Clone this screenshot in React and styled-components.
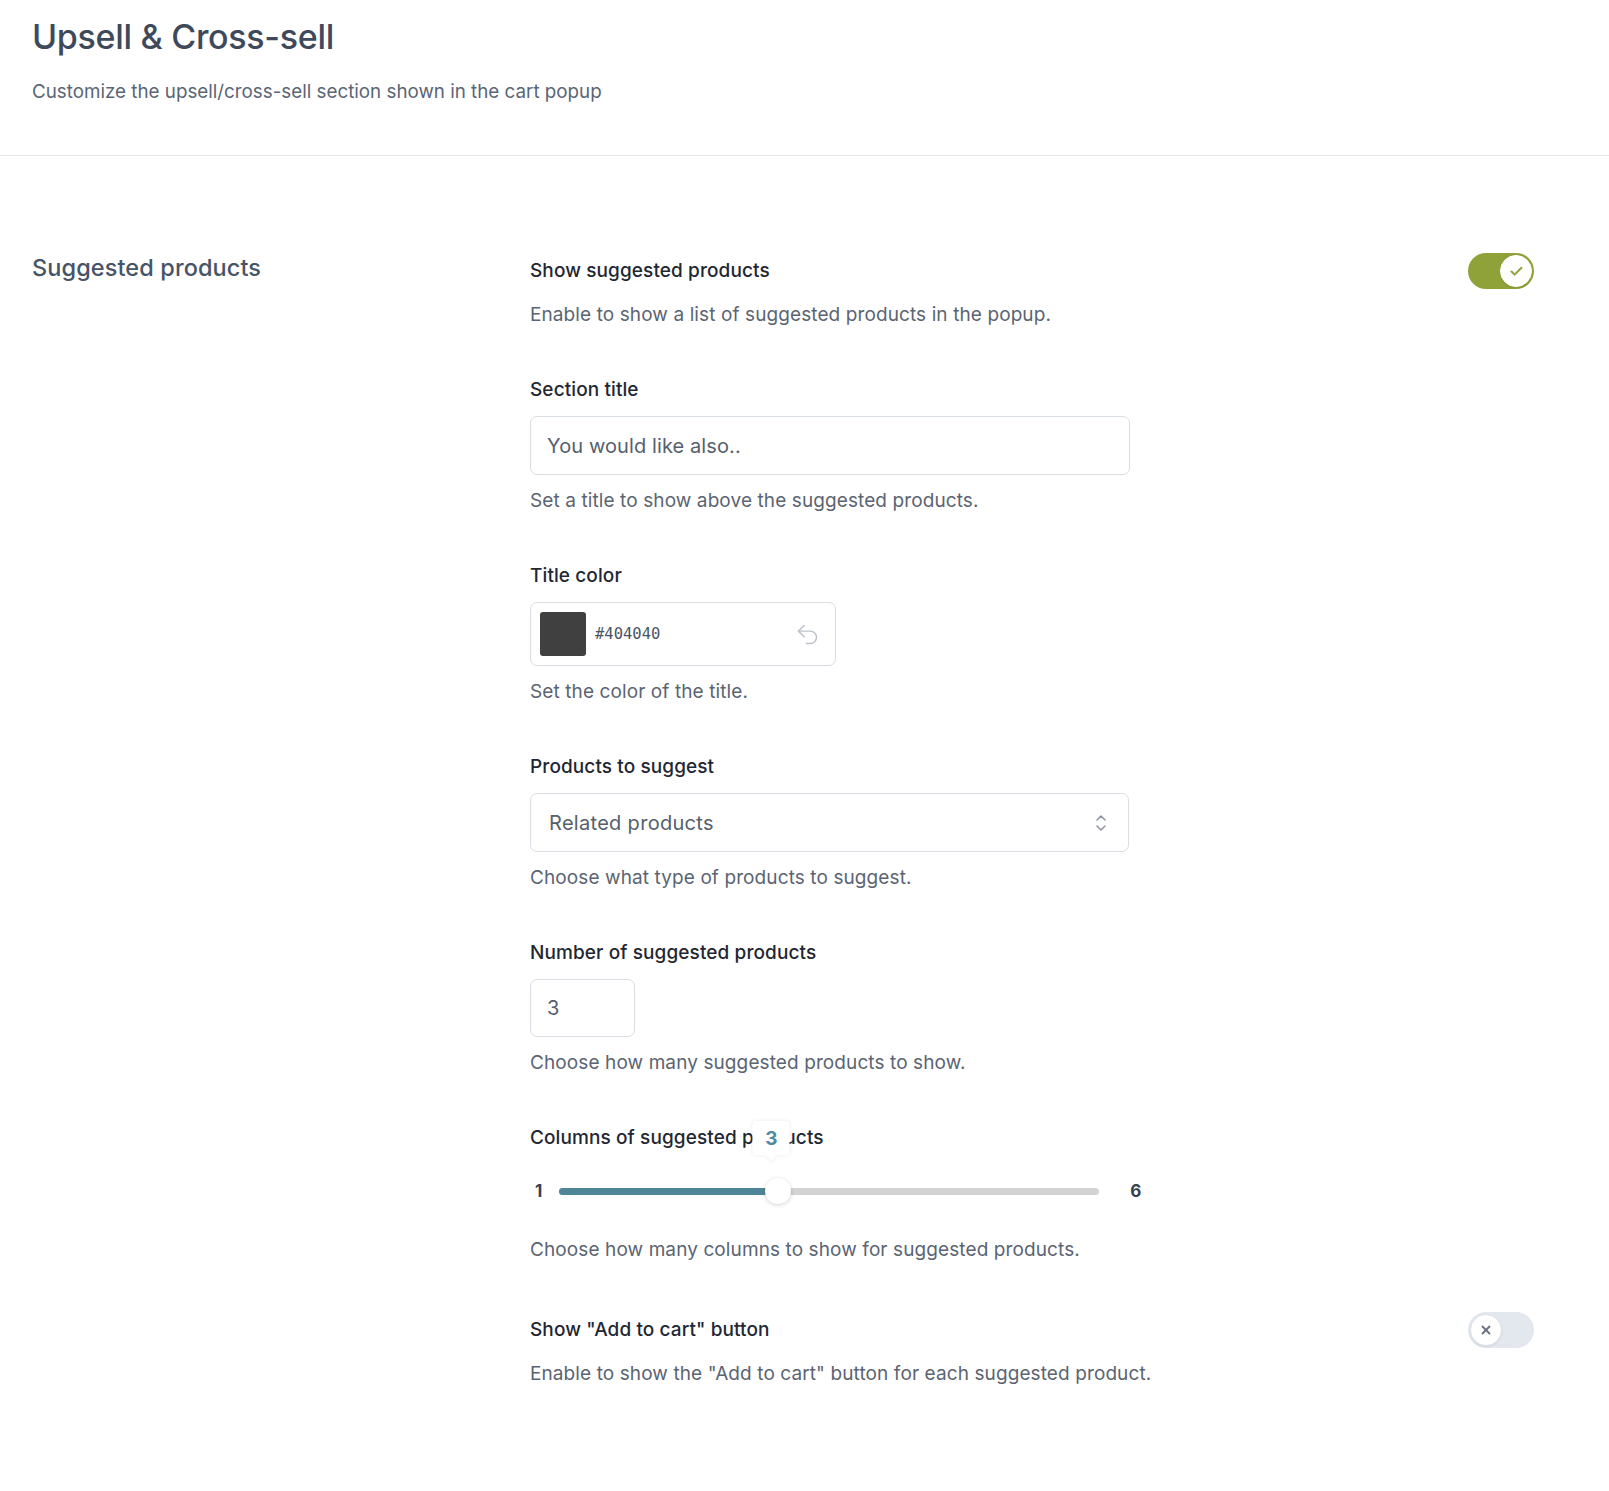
import { useState } from "react";
import styled, { createGlobalStyle } from "styled-components";
import { Check, X, Undo2 } from "lucide-react";

const GlobalStyle = createGlobalStyle`
  body {
    margin: 0;
    background: #ffffff;
    font-family: Inter, "Noto Sans", sans-serif;
    -webkit-font-smoothing: antialiased;
  }
  * { box-sizing: border-box; }
`;

export default function App() {
  const [showSuggested, setShowSuggested] = useState(true);
  const [showCart, setShowCart] = useState(false);
  const [title, setTitle] = useState("You would like also..");
  const [count, setCount] = useState(3);
  const columns = 3;
  const min = 1;
  const max = 6;
  const pct = ((columns - min) / (max - min)) * 100;

  return (
    <>
      <GlobalStyle />
      <Header>
        <Page__title>Upsell &amp; Cross-sell</Page__title>
        <Page__sub>Customize the upsell/cross-sell section shown in the cart popup</Page__sub>
      </Header>

      <Section>
        <Section__title>Suggested products</Section__title>

        <Fields>
          <Field>
            <Field__row>
              <Label>Show suggested products</Label>
              <Toggle $on={showSuggested} onClick={() => setShowSuggested(!showSuggested)}>
                <Knob $on={showSuggested}>
                  {showSuggested ? (
                    <Check size={15} strokeWidth={3.2} color="#8fa23a" />
                  ) : (
                    <X size={14} strokeWidth={3.2} color="#6b7280" />
                  )}
                </Knob>
              </Toggle>
            </Field__row>
            <Help>Enable to show a list of suggested products in the popup.</Help>
          </Field>

          <Field>
            <Label>Section title</Label>
            <Text__input value={title} onChange={(e) => setTitle(e.target.value)} />
            <Help>Set a title to show above the suggested products.</Help>
          </Field>

          <Field>
            <Label>Title color</Label>
            <Color__box>
              <Swatch $color="#404040" />
              <Color__code>#404040</Color__code>
              <Undo2 size={27} strokeWidth={1.3} color="#bcc2ca" />
            </Color__box>
            <Help>Set the color of the title.</Help>
          </Field>

          <Field>
            <Label>Products to suggest</Label>
            <Select__box>
              <span>Related products</span>
              <svg width="14" height="22" viewBox="0 0 14 22" fill="none" stroke="#8a929c" strokeWidth="1.5" strokeLinecap="round" strokeLinejoin="round">
                <path d="M3 8 L7 4 L11 8" />
                <path d="M3 14 L7 18 L11 14" />
              </svg>
            </Select__box>
            <Help>Choose what type of products to suggest.</Help>
          </Field>

          <Field>
            <Label>Number of suggested products</Label>
            <Number__input type="text" value={count} onChange={(e) => setCount(e.target.value)} />
            <Help>Choose how many suggested products to show.</Help>
          </Field>

          <Field>
            <Label>Columns of suggested products</Label>
            <Slider__row>
              <Slider__end>{min}</Slider__end>
              <Track>
                <Fill style={{ width: `${pct}%` }} />
                <Thumb style={{ left: `${pct}%` }}>
                  <Bubble>{columns}</Bubble>
                </Thumb>
              </Track>
              <Slider__end $max>{max}</Slider__end>
            </Slider__row>
            <Help>Choose how many columns to show for suggested products.</Help>
          </Field>

          <Field>
            <Field__row>
              <Label>Show "Add to cart" button</Label>
              <Toggle $on={showCart} onClick={() => setShowCart(!showCart)}>
                <Knob $on={showCart}>
                  {showCart ? (
                    <Check size={15} strokeWidth={3.2} color="#8fa23a" />
                  ) : (
                    <X size={14} strokeWidth={3.2} color="#6b7280" />
                  )}
                </Knob>
              </Toggle>
            </Field__row>
            <Help>Enable to show the "Add to cart" button for each suggested product.</Help>
          </Field>
        </Fields>
      </Section>
    </>
  );
}

const Header = styled.header`
  padding: 17px 32px 50px;
  border-bottom: 1px solid #e3e6ea;
`;

const Page__title = styled.h1`
  margin: 0;
  font-size: 34px;
  line-height: 40px;
  font-weight: 500;
  color: #3e4a5b;
  letter-spacing: -0.3px;
`;

const Page__sub = styled.p`
  margin: 22px 0 0;
  font-size: 18.8px;
  line-height: 26px;
  color: #5a6575;
`;

const Section = styled.section`
  display: grid;
  grid-template-columns: 498px 1fr;
  padding: 97px 75px 80px 32px;
`;

const Section__title = styled.h2`
  margin: 0;
  font-size: 23.5px;
  line-height: 30px;
  font-weight: 500;
  color: #475467;
  letter-spacing: 0.1px;
`;

const Fields = styled.div`
  display: flex;
  flex-direction: column;
  gap: 49px;
`;

const Field = styled.div`
  display: flex;
  flex-direction: column;
  align-items: flex-start;
  gap: 13px;
`;

const Field__row = styled.div`
  display: flex;
  align-items: center;
  justify-content: space-between;
  align-self: stretch;
  height: 36px;
`;

const Label = styled.div`
  font-size: 19px;
  line-height: 26px;
  font-weight: 500;
  color: #1f2733;
  letter-spacing: 0.1px;
`;

const Help = styled.div`
  font-size: 19px;
  line-height: 26px;
  color: #5b6472;
  letter-spacing: 0.1px;
`;

const Toggle = styled.button`
  position: relative;
  width: 66px;
  height: 36px;
  padding: 2px;
  border: none;
  border-radius: 18px;
  background: ${(p) => (p.$on ? "#8fa23a" : "#e3e8ef")};
  display: flex;
  justify-content: ${(p) => (p.$on ? "flex-end" : "flex-start")};
  align-items: center;
  cursor: pointer;
`;

const Knob = styled.span`
  width: 32px;
  height: 32px;
  border-radius: 50%;
  background: #ffffff;
  border: 1px solid ${(p) => (p.$on ? "#ffffff" : "#dfe3e8")};
  display: flex;
  align-items: center;
  justify-content: center;
  box-shadow: 0 1px 2px rgba(0, 0, 0, 0.08);
`;

const Input__base = styled.input`
  height: 59px;
  border: 1px solid #d9dee4;
  border-radius: 7px;
  padding: 0 16px;
  font-family: Inter, "Noto Sans", sans-serif;
  font-size: 20px;
  letter-spacing: 0.1px;
  color: #56606d;
  background: #ffffff;
  outline: none;
`;

const Text__input = styled(Input__base)`
  width: 600px;
`;

const Number__input = styled(Input__base)`
  width: 105px;
  height: 58px;
`;

const Color__box = styled.div`
  width: 306px;
  height: 64px;
  border: 1px solid #d9dee4;
  border-radius: 7px;
  display: flex;
  align-items: center;
  padding: 0 14px 0 9px;
  gap: 9px;
`;

const Swatch = styled.span`
  width: 46px;
  height: 44px;
  border-radius: 3px;
  background: ${(p) => p.$color};
`;

const Color__code = styled.span`
  flex: 1;
  font-family: "DejaVu Sans Mono", "Liberation Mono", monospace;
  font-size: 15.5px;
  color: #4b5563;
`;

const Select__box = styled.div`
  width: 599px;
  height: 59px;
  border: 1px solid #d9dee4;
  border-radius: 7px;
  display: flex;
  align-items: center;
  justify-content: space-between;
  padding: 0 20px 0 18px;
  font-size: 20px;
  letter-spacing: 0.3px;
  color: #56606d;
`;

const Slider__row = styled.div`
  display: flex;
  align-items: center;
  height: 40px;
  margin: 7px 0 13px;
  padding-left: 5px;
`;

const Slider__end = styled.span`
  font-size: 17px;
  font-weight: 700;
  color: #374151;
  margin: ${(p) => (p.$max ? "0 0 0 31px" : "0 17px 0 0")};
`;

const Track = styled.div`
  position: relative;
  width: 540px;
  height: 7px;
  border-radius: 4px;
  background: #d3d3d3;
`;

const Fill = styled.div`
  height: 100%;
  border-radius: 4px;
  background: #4e8698;
`;

const Thumb = styled.div`
  position: absolute;
  top: 50%;
  width: 26px;
  height: 26px;
  margin: -13px 0 0 -10px;
  border-radius: 50%;
  background: #ffffff;
  box-shadow: 0 1px 4px rgba(0, 0, 0, 0.18);
`;

const Bubble = styled.div`
  position: absolute;
  left: 50%;
  bottom: 49px;
  transform: translateX(calc(-50% - 7px));
  width: 37px;
  height: 34px;
  background: #ffffff;
  border-radius: 4px;
  box-shadow: 0 0 4px rgba(0, 0, 0, 0.08);
  display: flex;
  align-items: center;
  justify-content: center;
  font-size: 19px;
  font-weight: 700;
  color: #4e8aa0;

  &::after {
    content: "";
    position: absolute;
    bottom: -4px;
    left: 50%;
    width: 8px;
    height: 8px;
    margin-left: -4px;
    background: #ffffff;
    transform: rotate(45deg);
    box-shadow: 2px 2px 2px rgba(0, 0, 0, 0.04);
  }
`;
